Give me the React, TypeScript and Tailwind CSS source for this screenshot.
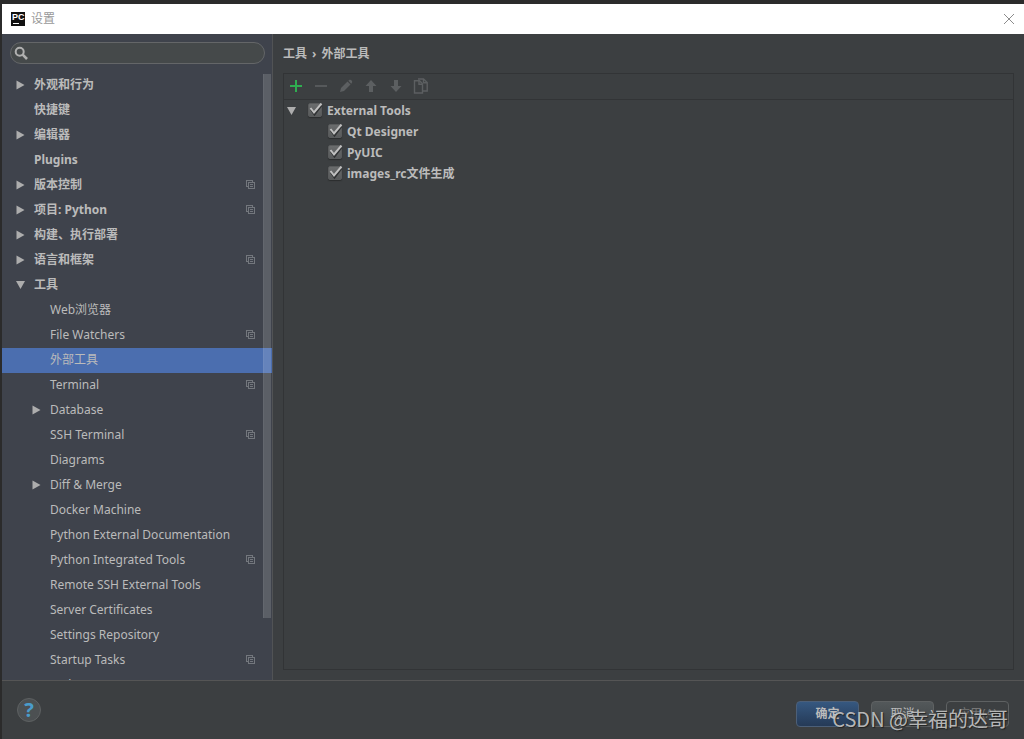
import { useState } from 'react';

type Item = {
  label: string;
  level: 0 | 1;
  arrow?: 'closed' | 'open';
  project?: boolean;
};

const ITEMS: Item[] = [
  { label: '外观和行为', level: 0, arrow: 'closed' },
  { label: '快捷键', level: 0 },
  { label: '编辑器', level: 0, arrow: 'closed' },
  { label: 'Plugins', level: 0 },
  { label: '版本控制', level: 0, arrow: 'closed', project: true },
  { label: '项目: Python', level: 0, arrow: 'closed', project: true },
  { label: '构建、执行部署', level: 0, arrow: 'closed' },
  { label: '语言和框架', level: 0, arrow: 'closed', project: true },
  { label: '工具', level: 0, arrow: 'open' },
  { label: 'Web浏览器', level: 1 },
  { label: 'File Watchers', level: 1, project: true },
  { label: '外部工具', level: 1 },
  { label: 'Terminal', level: 1, project: true },
  { label: 'Database', level: 1, arrow: 'closed' },
  { label: 'SSH Terminal', level: 1, project: true },
  { label: 'Diagrams', level: 1 },
  { label: 'Diff & Merge', level: 1, arrow: 'closed' },
  { label: 'Docker Machine', level: 1 },
  { label: 'Python External Documentation', level: 1 },
  { label: 'Python Integrated Tools', level: 1, project: true },
  { label: 'Remote SSH External Tools', level: 1 },
  { label: 'Server Certificates', level: 1 },
  { label: 'Settings Repository', level: 1 },
  { label: 'Startup Tasks', level: 1, project: true },
  { label: 'Tasks', level: 1 },
];

const TOOLS = ['Qt Designer', 'PyUIC', 'images_rc文件生成'];

function Arrow({ open }: { open?: boolean }) {
  return (
    <svg width="10" height="10" viewBox="0 0 10 10" fill="#adadad">
      {open ? <path d="M0 1H9L4.5 9Z" /> : <path d="M0.5 0.5V9.5L8.5 5Z" />}
    </svg>
  );
}

function ProjectIcon() {
  return (
    <svg width="9" height="9" viewBox="0 0 9 9" fill="none" stroke="#73777d" shapeRendering="crispEdges">
      <path d="M1.5 6.5H0.5V0.5H6.5V1.5" />
      <path d="M2.5 2.5H8.5V8.5H2.5Z" />
      <path d="M4 4.5H7M4 6.5H7" />
    </svg>
  );
}

function PyCharmIcon() {
  return (
    <svg width="14" height="14" viewBox="0 0 14 14" aria-hidden="true">
      <rect width="14" height="14" fill="#111" />
      <text x="1" y="8" fill="#fff" fontSize="9" fontWeight="bold" fontFamily="Liberation Sans, sans-serif">PC</text>
      <rect x="2" y="11" width="6" height="1" fill="#fff" />
    </svg>
  );
}

function Check({ label }: { label: string }) {
  const [checked, setChecked] = useState(true);
  return (
    <label className="flex h-[21px] items-center gap-1">
      <span className="relative flex size-[15px] shrink-0">
        <input
          type="checkbox"
          checked={checked}
          onChange={e => setChecked(e.target.checked)}
          className="size-[14px] appearance-none rounded-xs border border-[#595b5c] bg-linear-to-b from-[#6a6c6d] to-[#585a5b] shadow-[0_1px_1px_#2b2d2e]"
        />
        {checked && (
          <svg className="pointer-events-none absolute inset-0" width="15" height="15" viewBox="0 0 15 15" fill="none">
            <path d="M3 6.5L6.5 11.5L13.5 2.5" stroke="#303233" strokeWidth="2" />
            <path d="M2.5 5L6 9.5L13.5 0.5" stroke="#c0c0c0" strokeWidth="2" />
          </svg>
        )}
      </span>
      <span className="font-bold">{label}</span>
    </label>
  );
}

function Toolbar() {
  const button = 'flex size-6 items-center justify-center';
  return (
    <div className="flex h-[26px] items-start gap-px border-b border-[#323436]">
      <button className={button} aria-label="Add">
        <svg width="12" height="12" viewBox="0 0 12 12" stroke="#2fae50" strokeWidth="2"><path d="M6 0V12M0 6H12" /></svg>
      </button>
      <button className={button} aria-label="Remove" disabled>
        <svg width="12" height="12" viewBox="0 0 12 12" stroke="#56595b" strokeWidth="2"><path d="M0 6H12" /></svg>
      </button>
      <button className={button} aria-label="Edit" disabled>
        <svg width="14" height="14" viewBox="0 0 14 14" fill="#5c5f61">
          <path d="M1 13L2 9L8.5 2.5L11.5 5.5L5 12Z" />
          <path d="M9.3 1.8L10.5 0.8Q12 0.5 13 2Q13.4 3 13 3.8L12.2 4.7Z" />
        </svg>
      </button>
      <button className={button} aria-label="Move up" disabled>
        <svg width="12" height="12" viewBox="0 0 12 12" fill="#5c5f61"><path d="M6 0L11.5 6H8V12H4V6H0.5Z" /></svg>
      </button>
      <button className={button} aria-label="Move down" disabled>
        <svg width="12" height="12" viewBox="0 0 12 12" fill="#5c5f61"><path d="M6 12L11.5 6H8V0H4V6H0.5Z" /></svg>
      </button>
      <button className={button} aria-label="Copy" disabled>
        <svg width="16" height="16" viewBox="0 0 16 16" fill="none" stroke="#5c5f61" strokeWidth="1.4">
          <path d="M1.5 2.8H6.5L9.5 5.8V15H1.5Z" />
          <path d="M6 2.8V6.3H9.5" />
          <path d="M5 1H10.5L14.2 4.5V13H10" />
          <path d="M10.5 1V4.8H14.2" />
        </svg>
      </button>
    </div>
  );
}

export default function App() {
  const [selected, setSelected] = useState('外部工具');

  return (
    <div className="relative flex h-screen flex-col overflow-hidden border-t-4 border-l-2 border-[#2b2b2b] bg-[#3c3f41] font-['Noto_Sans','Noto_Sans_CJK_SC',sans-serif] text-xs text-[#bbbbbb]">
      <header className="flex h-[30px] shrink-0 items-center gap-1.5 bg-white px-[9px] text-[#999999]">
        <PyCharmIcon />
        <h1 className="flex-1">设置</h1>
        <button aria-label="Close">
          <svg width="12" height="12" viewBox="0 0 12 12" stroke="#8c8c8c"><path d="M1 1L11 11M11 1L1 11" /></svg>
        </button>
      </header>

      <div className="flex min-h-0 flex-1">
        <aside className="relative flex w-[271px] shrink-0 flex-col border-r border-[#515355] bg-[#3f434c]">
          <div className="relative mt-2 mr-[7px] mb-[9px] ml-2">
            <input
              type="search"
              aria-label="Search settings"
              className="block h-[22px] w-full rounded-full border border-[#646668] bg-[#45494a] pr-3 pl-6 outline-none"
            />
            <svg className="absolute top-1 left-1" width="14" height="14" viewBox="0 0 14 14" fill="none" stroke="#b0b0b0" strokeWidth="2">
              <circle cx="5.7" cy="5.7" r="4" />
              <path d="M8.7 8.7L13 13" strokeWidth="2.6" />
            </svg>
          </div>

          <nav className="min-h-0 flex-1 overflow-hidden">
            {ITEMS.map(item => (
              <button
                key={item.label}
                onClick={() => setSelected(item.label)}
                className={`flex h-[25px] w-full items-center gap-2 pr-[17px] pb-0.5 text-left ${
                  item.level === 0 ? 'pl-3.5 font-bold' : 'pl-[30px]'
                } ${selected === item.label ? 'bg-[#4b6eaf]' : ''}`}
              >
                <span className="w-2.5 shrink-0">
                  {item.arrow && <Arrow open={item.arrow === 'open'} />}
                </span>
                <span className="flex-1 whitespace-nowrap">{item.label}</span>
                {item.project && <ProjectIcon />}
              </button>
            ))}
          </nav>

          {/* Scrollbar thumb */}
          <div className="absolute top-10 right-px bottom-[62px] w-2 border-l border-white/5 bg-white/15" />
        </aside>

        <main className="flex min-w-0 flex-1 flex-col px-2.5 pb-2.5">
          <div className="flex h-[39px] items-center gap-[5px] font-bold">
            <span>工具</span>
            <span>›</span>
            <span>外部工具</span>
          </div>
          <section className="flex-1 border border-[#323436]">
            <Toolbar />
            <div className="pl-[3px]">
              <div className="flex items-center gap-[11px]">
                <button aria-label="Collapse External Tools"><Arrow open /></button>
                <Check label="External Tools" />
              </div>
              <div className="pl-[41px]">
                {TOOLS.map(tool => <Check key={tool} label={tool} />)}
              </div>
            </div>
          </section>
        </main>
      </div>

      <footer className="flex h-[59px] shrink-0 items-center border-t border-[#555555] px-[15px]">
        <button
          aria-label="Help"
          className="flex size-6 items-center justify-center rounded-full border border-[#5e6162] bg-[#4c5052] text-xl font-bold text-[#4a9ccb]"
        >
          ?
        </button>
        <div className="mt-2 ml-auto flex gap-3">
          <button className="h-[26px] w-[63px] rounded-sm border border-[#4c5f78] bg-linear-to-b from-[#365880] to-[#253a57] font-bold">确定</button>
          <button className="h-[26px] w-[63px] rounded-sm border border-[#5e6162] bg-linear-to-b from-[#53585a] to-[#414648]">取消</button>
          <button className="h-[26px] w-[63px] rounded-sm border border-[#5e6162] text-[#777777]" disabled>应用(A)</button>
        </div>
      </footer>

      <p className="pointer-events-none absolute right-4 bottom-1.5 font-['Noto_Sans_CJK_SC',sans-serif] text-xl leading-7 whitespace-nowrap text-[#c8c8c8]/90 [text-shadow:1px_1px_1px_#222]">
        CSDN @幸福的达哥
      </p>
    </div>
  );
}
